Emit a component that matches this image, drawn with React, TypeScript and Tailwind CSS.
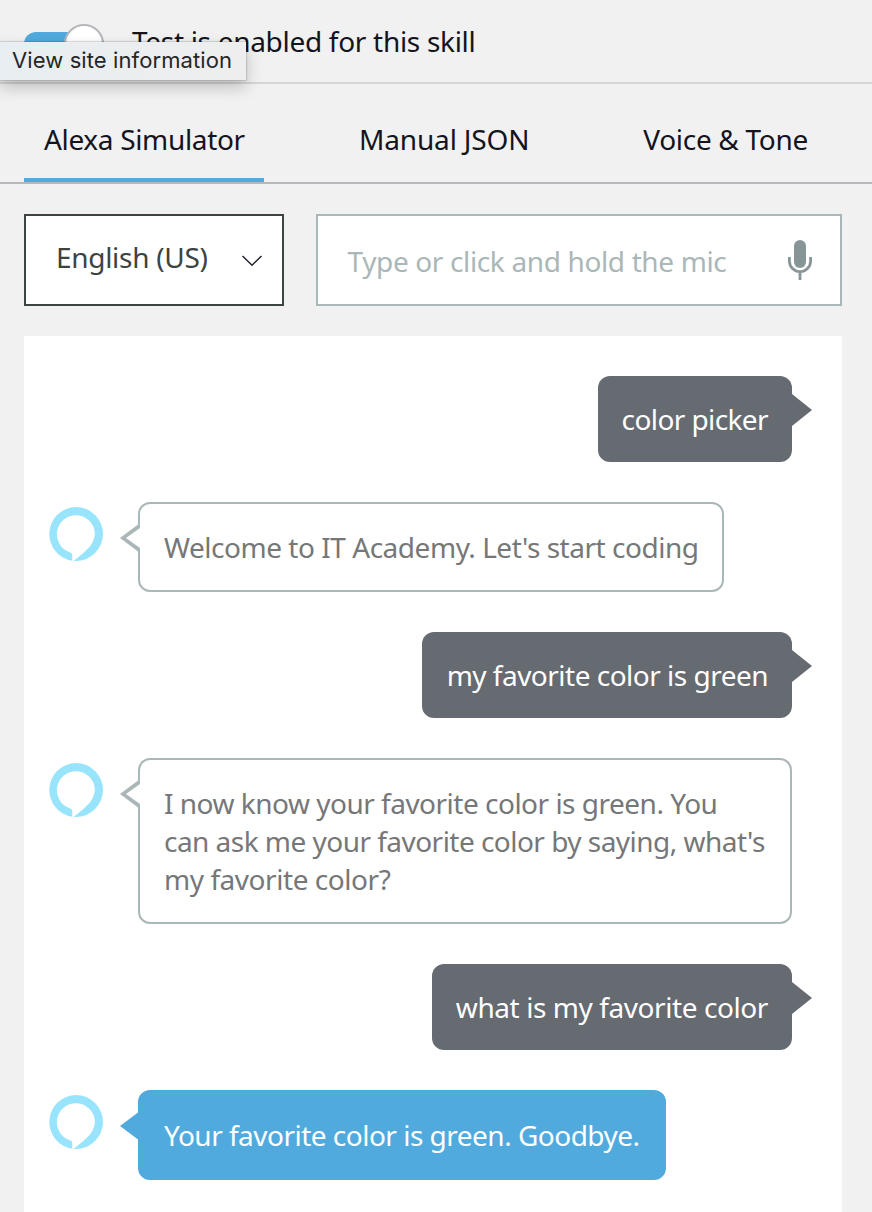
import type { ReactNode } from "react";

function AlexaLogo() {
  return (
    <svg className="mt-[5px] ml-[25px] h-[54px] w-[54px] shrink-0" viewBox="0 0 54 54">
      <path
        fill="#98e4fc"
        fillRule="evenodd"
        d="M27 0A27 27 0 0 0 23.3 53.7V48.5C23.3 46.5 22.5 45.9 20.6 45.2A19 19 0 1 1 45.8 25.6C46 36.5 39 43 24.5 53.9L27 54A27 27 0 0 0 27 0Z"
      />
    </svg>
  );
}

function UserMessage({ children, className }: { children: ReactNode; className: string }) {
  return (
    <div className="flex justify-end pr-[30px]">
      <div
        className={`flex h-[86px] items-start justify-end rounded-xl bg-[#666a71] py-6 pr-6 whitespace-nowrap text-white ${className}`}
      >
        {children}
      </div>
      <svg className="mt-[18px] h-8 w-5 shrink-0" viewBox="0 0 20 32">
        <path d="M0 0L20 16L0 32Z" fill="#666a71" />
      </svg>
    </div>
  );
}

function AlexaMessage({
  children,
  className,
  filled = false,
}: {
  children: ReactNode;
  className: string;
  filled?: boolean;
}) {
  return (
    <div className="flex items-start">
      <AlexaLogo />
      <svg className="relative z-10 mt-[21px] -mr-[2px] ml-[17px] h-[30px] w-5 shrink-0" viewBox="0 0 20 30">
        {filled ? (
          <path d="M0 15L20 0V30Z" fill="#50aadd" />
        ) : (
          <>
            <path d="M20 3L4 15L20 27Z" fill="white" />
            <path d="M20 0L0 15L20 30V25L6 15L20 5Z" fill="#aab7b8" />
          </>
        )}
      </svg>
      <div
        className={`shrink-0 rounded-xl border-2 py-6 pl-6 whitespace-nowrap ${className} ${
          filled ? "border-[#50aadd] bg-[#50aadd] text-white" : "border-[#aab7b8] bg-white text-[#757778]"
        }`}
      >
        {children}
      </div>
    </div>
  );
}

export default function App() {
  return (
    <div className="relative flex h-[1212px] w-[872px] flex-col overflow-hidden bg-[#f1f1f1] font-['Noto_Sans',sans-serif] text-[28px] leading-[38px] text-[#16191f]">
      <header className="flex h-[84px] shrink-0 items-start border-b-2 border-[#d5d5d6] pl-6">
        <div className="mt-6 flex h-10 w-20 items-center">
          <div className="flex h-6 w-full items-center justify-end rounded-full bg-[#50aadd]">
            <div className="h-10 w-10 shrink-0 rounded-full border-2 border-[#b6b6bd] bg-white" />
          </div>
        </div>
        <span className="mt-[22px] ml-7 tracking-[-0.3px] whitespace-nowrap text-[#14141f]">Test is enabled for this skill</span>
      </header>

      <nav className="flex h-[100px] shrink-0 border-b-2 border-[#b6b6bd] px-6 text-[#14141f]">
        <div className="w-60 border-b-4 border-[#50aadd] pt-9 pl-5 whitespace-nowrap tracking-[-0.33px]">Alexa Simulator</div>
        <div className="pt-9 pl-[95px] whitespace-nowrap tracking-[-0.15px]">Manual JSON</div>
        <div className="ml-auto pt-9 pr-10 whitespace-nowrap tracking-[-0.3px]">Voice &amp; Tone</div>
      </nav>

      <div className="flex shrink-0 gap-8 px-6 pt-[30px]">
        <div className="flex h-[92px] w-[260px] shrink-0 items-start border-2 border-[#3c4343] bg-white pl-[30px] text-[#3c4343]">
          <span className="mt-[22px] whitespace-nowrap tracking-[-0.3px]">English (US)</span>
          <svg className="mt-[39px] mr-[19px] ml-auto h-3 w-[21px]" viewBox="0 0 21 12" fill="none">
            <path d="M0.5 1L10 10.2L19.5 1" stroke="#232330" strokeWidth="1.5" />
          </svg>
        </div>
        <div className="flex h-[92px] w-[526px] shrink-0 items-start border-2 border-[#aab7b8] bg-white pl-[29.5px] text-[#aab7b8]">
          <span className="mt-[26px] whitespace-nowrap tracking-[-0.36px]">Type or click and hold the mic</span>
          <svg className="mt-6 mr-7 ml-auto h-10 w-6" viewBox="0 0 24 40">
            <rect x="6" y="0" width="12" height="28" rx="6" fill="#879596" />
            <path d="M1.4 17V21A10.6 10.6 0 0 0 22.6 21V17M12 31V40.5" fill="none" stroke="#879596" strokeWidth="2.8" />
          </svg>
        </div>
      </div>

      <main className="mt-[30px] ml-6 flex w-[818px] grow flex-col gap-10 bg-white pt-10">
        <UserMessage className="w-[194px]">
          <span className="tracking-[-0.6px]">color picker</span>
        </UserMessage>
        <AlexaMessage className="h-[90px] w-[586px]">
          <span className="tracking-[-0.47px]">Welcome to IT Academy. Let's start coding</span>
        </AlexaMessage>
        <UserMessage className="w-[370px]">
          <span className="tracking-[-0.51px]">my favorite color is green</span>
        </UserMessage>
        <AlexaMessage className="h-[166px] w-[654px]">
          <p className="tracking-[-0.5px]">I now know your favorite color is green. You</p>
          <p className="tracking-[-0.53px]">can ask me your favorite color by saying, what's</p>
          <p className="tracking-[-0.45px]">my favorite color?</p>
        </AlexaMessage>
        <UserMessage className="w-[360px]">
          <span className="tracking-[-0.42px]">what is my favorite color</span>
        </UserMessage>
        <AlexaMessage className="h-[90px] w-[528px]" filled>
          <span className="tracking-[-0.51px]">Your favorite color is green. Goodbye.</span>
        </AlexaMessage>
      </main>

      <div className="absolute top-[42px] left-0 flex h-[38px] w-[246px] items-center bg-linear-to-r from-[#e8eef1] to-[#eeeeee] pb-[2px] pl-3 font-['Inter',sans-serif] text-[22px] text-[#262626] shadow-[0_0_1px_1px_rgba(0,0,0,0.12),0_7px_16px_rgba(0,0,0,0.22)]">
        <span className="whitespace-nowrap tracking-[0.1px]">View site information</span>
      </div>
    </div>
  );
}
